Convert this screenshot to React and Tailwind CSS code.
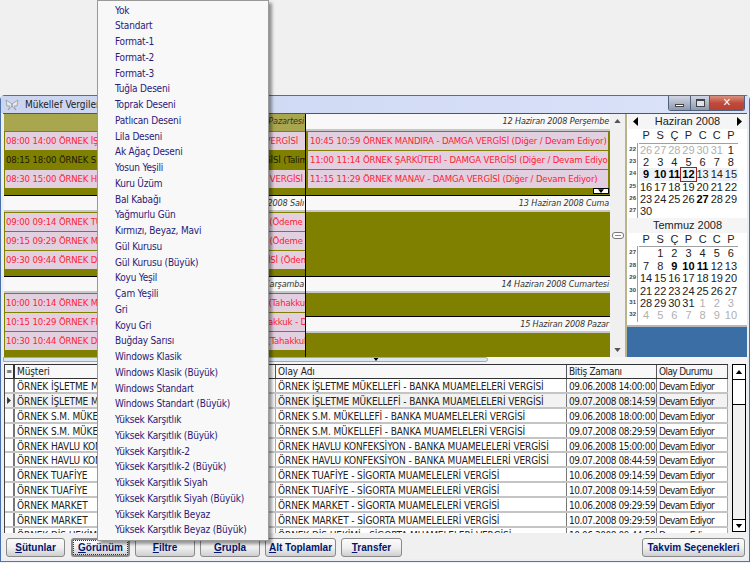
const menuItems = [
  "Yok", "Standart", "Format-1", "Format-2", "Format-3", "Tuğla Deseni", "Toprak Deseni", "Patlıcan Deseni",
  "Lila Deseni", "Ak Ağaç Deseni", "Yosun Yeşili", "Kuru Üzüm", "Bal Kabağı", "Yağmurlu Gün",
  "Kırmızı, Beyaz, Mavi", "Gül Kurusu", "Gül Kurusu (Büyük)", "Koyu Yeşil", "Çam Yeşili", "Gri", "Koyu Gri",
  "Buğday Sarısı", "Windows Klasik", "Windows Klasik (Büyük)", "Windows Standart", "Windows Standart (Büyük)",
  "Yüksek Karşıtlık", "Yüksek Karşıtlık (Büyük)", "Yüksek Karşıtlık-2", "Yüksek Karşıtlık-2 (Büyük)",
  "Yüksek Karşıtlık Siyah", "Yüksek Karşıtlık Siyah (Büyük)", "Yüksek Karşıtlık Beyaz", "Yüksek Karşıtlık Beyaz (Büyük)",
];

const BANKA = "BANKA MUAMELELERİ VERGİSİ";
const SIGORTA = "SİGORTA MUAMELELERİ VERGİSİ";

const gridRows = [
  ["ÖRNEK İŞLETME MÜKELLEFİ", BANKA, "09.06.2008 14:00:00"],
  ["ÖRNEK İŞLETME MÜKELLEFİ", BANKA, "09.07.2008 08:14:59"],
  ["ÖRNEK S.M. MÜKELLEFİ", BANKA, "09.06.2008 18:00:00"],
  ["ÖRNEK S.M. MÜKELLEFİ", BANKA, "09.07.2008 08:29:59"],
  ["ÖRNEK HAVLU KONFEKSİYON", BANKA, "09.06.2008 15:00:00"],
  ["ÖRNEK HAVLU KONFEKSİYON", BANKA, "09.07.2008 08:44:59"],
  ["ÖRNEK TUAFİYE", SIGORTA, "10.06.2008 09:14:59"],
  ["ÖRNEK TUAFİYE", SIGORTA, "10.07.2008 09:14:59"],
  ["ÖRNEK MARKET", SIGORTA, "10.06.2008 09:29:59"],
  ["ÖRNEK MARKET", SIGORTA, "10.07.2008 09:29:59"],
  ["ÖRNEK DİŞ HEKİMİ", SIGORTA, "10.06.2008 09:44:59"],
];

const junWeeks = [
  [22, ["26", "27", "28", "29", "30", "31", "1"]],
  [23, ["2", "3", "4", "5", "6", "7", "8"]],
  [24, ["9", "10", "11", "12", "13", "14", "15"]],
  [25, ["16", "17", "18", "19", "20", "21", "22"]],
  [26, ["23", "24", "25", "26", "27", "28", "29"]],
  [27, ["30", "", "", "", "", "", ""]],
];
const julWeeks = [
  [27, ["", "1", "2", "3", "4", "5", "6"]],
  [28, ["7", "8", "9", "10", "11", "12", "13"]],
  [29, ["14", "15", "16", "17", "18", "19", "20"]],
  [30, ["21", "22", "23", "24", "25", "26", "27"]],
  [31, ["28", "29", "30", "31", "1", "2", "3"]],
  [32, ["4", "5", "6", "7", "8", "9", "10"]],
];

function Arrow({ dir = "up", className = "" }) {
  const points = dir === "up" ? "0,5 4,0 8,5" : dir === "down" ? "0,0 8,0 4,5" : dir === "left" ? "5,0 5,9 0,4.5" : "0,0 0,9 5,4.5";
  const box = dir === "up" || dir === "down" ? "0 0 8 5" : "0 0 5 9";
  return (
    <svg viewBox={box} className={className}>
      <polygon points={points} fill="currentColor" />
    </svg>
  );
}

function Event({ text, busy = true, inset }) {
  return (
    <div className={`h-[18px] shrink-0 text-[9.5px] tracking-[-0.15px] leading-[17px] whitespace-nowrap overflow-hidden ${inset ? "mx-[2px] pl-[2px]" : "ml-[1px] pl-[1px]"} ${busy ? "bg-[#e2cfe0] text-[#ff2233]" : "text-[#1a1a00]"}`}>
      {text}
    </div>
  );
}

function DayCell({ title, selected, events = [], heightClass, headerClass = "h-[16px]", more, line = true, inset }) {
  return (
    <div className={`flex flex-col ${heightClass} ${line ? "border-b border-black" : ""}`}>
      <div className={`${headerClass} shrink-0 border-b-2 pr-[1px] text-right italic text-[9px] tracking-[-0.15px] leading-[14px] whitespace-nowrap overflow-hidden text-[#333] ${selected ? "bg-[#a9a650] border-[#a9a650]" : "bg-[#f8f8f8] border-[#c8c8c8]"}`}>
        {title}
      </div>
      <div className="relative flex-1 bg-[#808000] flex flex-col gap-[1px] pt-[1px]">
        {events.map((e, i) => (
          <Event key={i} text={e.text} busy={e.busy !== false} inset={inset} />
        ))}
        {more && (
          <div className="absolute right-[1px] bottom-[1px] w-[16px] h-[6px] bg-white border border-black flex items-center justify-center">
            <Arrow dir="down" className="w-[6px] h-[4px] text-black" />
          </div>
        )}
      </div>
    </div>
  );
}

function MiniMonth({ title, weeks, muted, bold, today, hot, nav }) {
  return (
    <div className="flex flex-col font-['Liberation_Sans',sans-serif]">
      <div className="h-[15px] bg-[#f5f5f5] flex items-center justify-between px-[5px] text-[11px] leading-[15px] text-[#222]">
        {nav ? <Arrow dir="left" className="w-[5px] h-[9px] text-black" /> : <span />}
        <span>{title}</span>
        {nav ? <Arrow dir="right" className="w-[5px] h-[9px] text-black" /> : <span />}
      </div>
      <div className="flex h-[13.5px] items-center">
        <div className="w-[11px]" />
        <div className="grid grid-cols-7 w-[99px] text-center text-[11px] leading-[13px] text-[#222]">
          {["P", "S", "Ç", "P", "C", "C", "P"].map((d, i) => (
            <span key={i}>{d}</span>
          ))}
        </div>
      </div>
      <div className="flex">
        <div className="w-[10px] border-r border-[#a0a0a0] flex flex-col items-end pr-[1px] shrink-0">
          {weeks.map(([n]) => (
            <span key={n} className="h-[12.4px] text-[6px] leading-[12px] font-bold text-[#444]">{n}</span>
          ))}
        </div>
        <div className="ml-[1px] w-[99px] border-t border-[#a0a0a0]">
          {weeks.map(([n, days], w) => (
            <div key={n} className={`grid grid-cols-7 h-[12.4px] text-center text-[11px] leading-[12px] ${hot === w ? "bg-[#eef2f8]" : ""}`}>
              {days.map((d, i) => {
                const b = bold(w, d);
                const t = today && today(w, d);
                return (
                  <span key={i} className={`${muted(w, i) ? "text-[#b0b0b0]" : "text-[#222]"} ${b ? "font-bold text-black" : ""} ${t ? "outline outline-1 outline-[#a02020]" : ""}`}>
                    {d}
                  </span>
                );
              })}
            </div>
          ))}
        </div>
      </div>
    </div>
  );
}

function Bevel({ children, className = "" }) {
  return (
    <button className={`h-[19px] whitespace-nowrap rounded-[3px] border border-[#8a8a8a] bg-gradient-to-b from-[#fbfbfb] via-[#f0f0f0] to-[#cfcfcf] font-['Liberation_Sans',sans-serif] text-[10px] font-bold text-[#00156e] leading-none ${className}`}>
      {children}
    </button>
  );
}

export default function App() {
  return (
    <div className="relative w-[750px] h-[563px] overflow-hidden bg-[#f0f0f0] font-['DejaVu_Sans_Condensed','Noto_Sans',sans-serif]">
      <div className="h-[95px]" />

      {/* window */}
      <div className="h-[467px] flex flex-col rounded-t-[5px] border border-[#4a6ea8] border-b-[#3a80c8] bg-[#e8edf8]">
        <div className="h-[17px] shrink-0 flex items-center pl-[4px] bg-gradient-to-r from-[#cbd5f0] to-[#dbe3fa] text-[10px] text-[#222]">
          <svg viewBox="0 0 14 12" className="w-[14px] h-[12px] mr-[6px]">
            <path d="M7 5 L1 1 L2 7 L5 7 L3 11 L6.5 8 Z M7 5 L13 1 L12 7 L9 7 L11 11 L7.5 8 Z" fill="#e8e8ee" stroke="#8a8f98" strokeWidth="0.7" />
          </svg>
          <span className="whitespace-nowrap">Mükellef Vergileri</span>
          <div className="ml-auto mt-[-3px] mr-[4px] flex h-[15px] w-[77px] rounded-b-[3px] border border-t-0 border-[#50607a] overflow-hidden">
            <div className="w-[22px] flex items-end justify-center pb-[3px] border-r border-[#50607a] bg-gradient-to-b from-[#d0d6e4] to-[#8f99ae]">
              <div className="w-[9px] h-[3px] bg-white border border-[#444]" />
            </div>
            <div className="w-[19px] flex items-center justify-center border-r border-[#50607a] bg-gradient-to-b from-[#d0d6e4] to-[#8f99ae]">
              <div className="w-[9px] h-[8px] bg-[#dde2ee] border border-[#444] border-t-2" />
            </div>
            <div className="flex-1 flex items-center justify-center bg-gradient-to-b from-[#d89080] via-[#c04a3a] to-[#b84030] text-white text-[11px] font-bold leading-none">✕</div>
          </div>
        </div>

        <div className="flex-1 flex flex-col mx-[2px] mb-[2px] bg-[#f0f0f0]">
          {/* scheduler */}
          <div className="h-[244px] shrink-0 flex border-t border-[#555] bg-[#f0f0f0]">
            <div className="ml-[1px] w-[302px] flex flex-col border-r border-black shrink-0">
              <DayCell
                title="9 Haziran 2008 Pazartesi"
                selected
                heightClass="h-[82px]"
                headerClass="h-[17px]"
                events={[
                  { text: "08:00 14:00 ÖRNEK İŞLETME MÜKELLEFİ - BANKA MUAMELESİ VERGİSİ" },
                  { text: "08:15 18:00 ÖRNEK S.M. MÜKELLEFİ - BANKA MUAMELESİ VERGİSİ (Talimat", busy: false },
                  { text: "08:30 15:00 ÖRNEK HAVLU KONFEKSİYON - BANKA MUAMELESİ VERGİSİ" },
                ]}
              />
              <DayCell
                title="10 Haziran 2008 Salı"
                heightClass="h-[81px]"
                events={[
                  { text: "09:00 09:14 ÖRNEK TUAFİYE - SİGORTA MUAMELELERİ VERGİSİ (Ödeme" },
                  { text: "09:15 09:29 ÖRNEK MARKET - SİGORTA MUAMELELERİ VERGİSİ (Ödeme /" },
                  { text: "09:30 09:44 ÖRNEK DİŞ HEKİMİ - SİGORTA MUAMELELERİ VERGİSİ (Ödeme" },
                ]}
              />
              <DayCell
                title="11 Haziran 2008 Çarşamba"
                heightClass="flex-1"
                line={false}
                events={[
                  { text: "10:00 10:14 ÖRNEK MANDIRA - KATMA DEĞER VERGİSİ BEYANI (Tahakkuk / Devam Ediyor)" },
                  { text: "10:15 10:29 ÖRNEK FIRIN - KATMA DEĞER VERGİSİ BEYANI (Tahakkuk - Devam Ediyor)" },
                  { text: "10:30 10:44 ÖRNEK DÖNERCİ - KATMA DEĞER VERGİSİ BEYANI (Tahakkuk / Devam Ediyor)" },
                ]}
              />
            </div>
            <div className="w-[304px] flex flex-col shrink-0">
              <DayCell
                title="12 Haziran 2008 Perşembe"
                heightClass="h-[82px]"
                headerClass="h-[17px]"
                more
                inset
                events={[
                  { text: "10:45 10:59 ÖRNEK MANDIRA - DAMGA VERGİSİ (Diğer / Devam Ediyor)" },
                  { text: "11:00 11:14 ÖRNEK ŞARKÜTERİ - DAMGA VERGİSİ (Diğer / Devam Ediyor)" },
                  { text: "11:15 11:29 ÖRNEK MANAV - DAMGA VERGİSİ (Diğer / Devam Ediyor)" },
                ]}
              />
              <DayCell title="13 Haziran 2008 Cuma" heightClass="h-[81px]" />
              <DayCell title="14 Haziran 2008 Cumartesi" heightClass="h-[40px]" />
              <DayCell title="15 Haziran 2008 Pazar" heightClass="flex-1" line={false} />
            </div>

            {/* vertical scroller */}
            <div className="w-[15px] shrink-0 bg-[#f0f0f0] flex flex-col items-center justify-between py-[5px] text-[#555]">
              <Arrow dir="up" className="w-[7px] h-[4px]" />
              <div className="w-[12px] h-[7px] rounded-[3px] border border-[#777] bg-white flex flex-col justify-center gap-[1px] px-[2px]">
                <div className="h-[1px] bg-[#888]" />
              </div>
              <Arrow dir="down" className="w-[7px] h-[4px]" />
            </div>

            {/* date navigator */}
            <div className="flex-1 flex flex-col border-l-2 border-[#b8b48c] bg-white">
              <div className="flex-1 pl-[1px]">
                <MiniMonth
                  title="Haziran 2008"
                  nav
                  weeks={junWeeks}
                  hot={2}
                  muted={(w, i) => w === 0 && i < 6}
                  bold={(w, d) => (w === 2 && ["9", "10", "11", "12"].includes(d)) || (w === 4 && d === "27")}
                  today={(w, d) => w === 2 && d === "12"}
                />
                <MiniMonth
                  title="Temmuz 2008"
                  weeks={julWeeks}
                  muted={(w, i) => w === 5 || (w === 4 && i > 3)}
                  bold={(w, d) => w === 1 && ["9", "10", "11"].includes(d)}
                />
              </div>
              <div className="h-[32px] shrink-0 border-t-2 border-[#b8b8b8] bg-[#3a6ea5]" />
            </div>
          </div>

          {/* splitter */}
          <div className="h-[7px] shrink-0 bg-[#f5f5f5]">
            <div className="h-[5px] w-[485px] border border-[#9ab] rounded-r-[3px] bg-[#dce6f4] flex justify-end pr-[108px]">
              <Arrow dir="down" className="w-[6px] h-[3px] text-black" />
            </div>
          </div>

          {/* grid */}
          <div className="flex-1 min-h-0 flex items-start">
            <div className="ml-[1px] w-[724px] h-[169px] overflow-hidden border-l border-[#444] bg-white text-[10px] tracking-[-0.1px] text-[#222]">
              <div className="flex h-[15px] border-y border-[#333] bg-[#f8f8f8] leading-[14px]">
                <div className="w-[10px] border-r-2 border-[#333] text-[8px] text-center">≡</div>
                <div className="w-[261px] border-r border-[#555] pl-[2px]">Müşteri</div>
                <div className="w-[291px] border-r border-[#555] pl-[2px]">Olay Adı</div>
                <div className="w-[90px] border-r border-[#555] pl-[2px] tracking-[-0.3px]">Bitiş Zamanı</div>
                <div className="w-[71px] border-r border-[#555] pl-[2px] tracking-[-0.6px]">Olay Durumu</div>
              </div>
              {gridRows.map(([customer, tax, end], i) => (
                <div key={i} className={`flex h-[14.9px] border-b-2 border-[#c4c4c4] leading-[15px] whitespace-nowrap ${i === 1 ? "bg-[#f2f2f2]" : ""}`}>
                  <div className="w-[10px] border-r-2 border-[#777] flex items-center justify-center">
                    {i === 1 && <Arrow dir="right" className="w-[4px] h-[7px] text-[#333]" />}
                  </div>
                  <div className="w-[261px] border-r border-[#aaa] pl-[2px] overflow-hidden">{customer}</div>
                  <div className="w-[291px] border-r border-[#777] pl-[2px] overflow-hidden">{customer} - {tax}</div>
                  <div className="w-[90px] border-r border-[#777] pl-[2px] overflow-hidden tracking-[-0.45px]">{end}</div>
                  <div className="w-[71px] border-r border-[#aaa] pl-[2px] overflow-hidden tracking-[-0.7px]">Devam Ediyor</div>
                </div>
              ))}
            </div>
            <div className="ml-[4px] w-[14px] h-[168px] border border-black bg-[#f0f0f0] flex flex-col">
              <div className="h-[15px] border-b border-black bg-white flex items-center justify-center">
                <Arrow dir="up" className="w-[8px] h-[4px] text-black" />
              </div>
              <div className="h-[25px] border-b border-black bg-white" />
              <div className="flex-1" />
              <div className="h-[12px] border-t border-black bg-white flex items-center justify-center">
                <Arrow dir="down" className="w-[8px] h-[4px] text-black" />
              </div>
            </div>
          </div>

          {/* buttons */}
          <div className="h-[21px] shrink-0 flex items-start gap-[5px] pl-[3px] pr-[2px]">
            <Bevel className="w-[59px]"><u>S</u>ütunlar</Bevel>
            <Bevel className="ml-[1px] w-[59px] outline-1 outline-dotted -outline-offset-3 outline-[#333] border-2 border-[#5a9ad8]"><u>G</u>örünüm</Bevel>
            <Bevel className="w-[60px]"><u>F</u>iltre</Bevel>
            <Bevel className="w-[60px]"><u>G</u>rupla</Bevel>
            <Bevel className="w-[71px]"><u>A</u>lt Toplamlar</Bevel>
            <Bevel className="w-[61px]"><u>T</u>ransfer</Bevel>
            <Bevel className="w-[103px] ml-auto">Takvim Seçenekleri</Bevel>
          </div>
        </div>
      </div>

      {/* popup menu */}
      <div className="absolute left-[97px] top-0 w-[172px] h-[541px] bg-[#f8f8f8] border border-[#9a9a9a] shadow-[3px_3px_3px_rgba(0,0,0,0.4)] pl-[17px] pt-[1.5px]">
        {menuItems.map((item) => (
          <div key={item} className="h-[15.75px] text-[10px] tracking-[-0.2px] leading-[15.75px] text-[#2b1a78] whitespace-nowrap">
            {item}
          </div>
        ))}
      </div>
    </div>
  );
}
